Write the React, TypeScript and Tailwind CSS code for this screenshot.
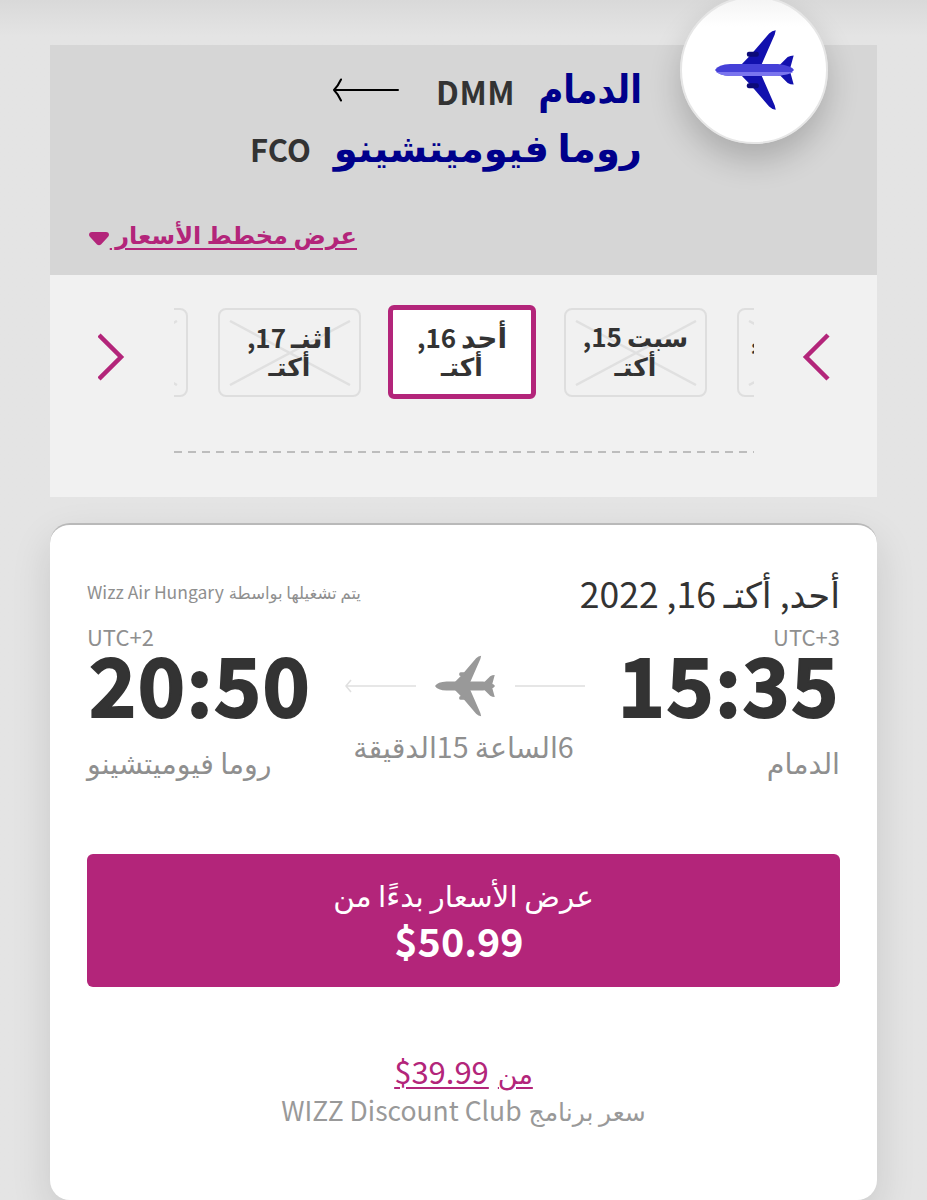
import { clsx } from "clsx";

interface DayOption {
  id: string;
  day: string;
  num: string;
  selected?: boolean;
  /** Spacing towards the next card on the left-to-right track. */
  className?: string;
  dayClassName?: string;
}

const MONTH = "أكتـ";

const days: DayOption[] = [
  { id: "18", day: "ثلا", num: "18,", className: "mr-[30px]", dayClassName: "text-[25px]" },
  { id: "17", day: "اثنـ", num: "17,", className: "mr-[27px]", dayClassName: "text-[28px]" },
  { id: "16", day: "أحد", num: "16,", selected: true, className: "mr-7", dayClassName: "text-[28px]" },
  { id: "15", day: "سبت", num: "15,", className: "mr-[30px]", dayClassName: "text-[25px]" },
  { id: "14", day: "جمعة", num: "14,", dayClassName: "text-[28px]" },
];

function Plane({ tone, className }: { tone: "blue" | "gray"; className?: string }) {
  const blue = tone === "blue";
  const wing = blue ? "#1210ae" : "#999";
  const engine = blue ? "#0c0a78" : "#999";
  return (
    <svg viewBox="0 0 238 240" className={className} aria-hidden="true">
      <g fill={wing}>
        <path d="M79 104 L108 74 L163 10 Q172 1 183 0 L180 13 L140 104 Z" />
        <path d="M79 136 L108 166 L163 230 Q172 239 183 240 L180 227 L140 136 Z" />
        <path d="M194 106 L219 81 Q227 76 237 76 L225 120 L237 164 Q227 164 219 159 L194 134 Z" />
      </g>
      <g fill={engine}>
        <rect x="96" y="65" width={blue ? 36 : 24} height="15" rx="6" />
        <rect x="96" y="160" width={blue ? 36 : 24} height="15" rx="6" />
      </g>
      <path
        d="M0 120 Q10 103 46 102 L190 102 Q232 108 238 120 Q232 132 190 138 L46 138 Q10 137 0 120 Z"
        fill={blue ? "#4540d8" : "#999"}
      />
      {blue && <path d="M3 126 L236 126 Q226 133 190 138 L46 138 Q16 137 3 126 Z" fill="#7a74ee" />}
    </svg>
  );
}

function Chevron({ dir }: { dir: "left" | "right" }) {
  return (
    <button type="button" aria-label={dir} className="h-12 w-7 shrink-0">
      <svg viewBox="0 0 28 48" className="h-12 w-7" fill="none" stroke="#b3257a" strokeWidth="4.500">
        <path d={dir === "left" ? "M26 2 L4 24 L26 46" : "M1 2 L23 24 L1 46"} />
      </svg>
    </button>
  );
}

function DayCard({ option }: { option: DayOption }) {
  return (
    <button
      type="button"
      dir="rtl"
      className={clsx(
        "relative flex shrink-0 flex-col items-center justify-center pb-[3px] text-[25px] font-bold leading-[29px] text-[#333]",
        option.selected
          ? "h-[94px] w-[148px] rounded-md border-[5px] border-[#b3257a] bg-white"
          : "h-[89px] w-[143px] rounded-lg border-2 border-[#dedede]",
        option.className,
      )}
    >
      {!option.selected && (
        <svg
          viewBox="0 0 122 66"
          className="absolute left-[9px] top-[10px] h-[66px] w-[122px]"
          stroke="#e0e0e0"
          strokeWidth="2.500"
        >
          <path d="M1 1 L121 65 M121 1 L1 65" />
        </svg>
      )}
      <span className="relative flex items-baseline gap-[5px] whitespace-nowrap">
        <span className={option.dayClassName}>{option.day}</span>
        <span className="text-[26px]">{option.num}</span>
      </span>
      <span className="relative">{MONTH}</span>
    </button>
  );
}

function RouteHeader() {
  return (
    <section className="relative h-[230px] bg-[#d6d6d6]">
      <div className="absolute -top-[49px] right-[49px] flex size-[148px] items-center justify-center rounded-full border-2 border-[#e6e6e6] bg-linear-to-b from-[#f4f4f4] to-white to-20% shadow-[0_16px_32px_rgba(0,0,0,0.2)]">
        <Plane tone="blue" className="h-20 w-[79px]" />
      </div>

      <div dir="rtl" className="flex flex-col pr-[235px] pt-[17px] font-bold">
        <div className="flex h-[57px] items-start">
          <span className="w-[103px] text-[39px] leading-[49px] text-[#00008b]">
            <span className="inline-block origin-right scale-x-[0.88]">الدمام</span>
          </span>
          <span className="mr-6 text-[32px] leading-[58px] tracking-[0.500px] text-[#333]">DMM</span>
          <svg
            viewBox="0 0 66 24"
            className="mr-[37px] mt-4 h-6 w-[66px]"
            fill="none"
            stroke="#000"
            strokeWidth="2"
            strokeLinecap="round"
          >
            <path d="M65 12 H1 M8 1.500 Q5 8 1 12 Q5 16 8 22.500" />
          </svg>
        </div>
        <div className="flex h-[57px] items-start">
          <span className="whitespace-nowrap text-[38.500px] leading-[52px] text-[#00008b]">روما فيوميتشينو</span>
          <span className="mr-[23px] text-[31px] leading-[60px] text-[#333]">FCO</span>
        </div>
      </div>

      <a dir="rtl" className="ml-[39px] mt-[38px] flex w-[268px] items-center justify-between text-[#b3257a]">
        <span className="whitespace-nowrap text-[24px] font-bold leading-[40px] underline decoration-2 underline-offset-4">
          عرض مخطط الأسعار&nbsp;
        </span>
        <svg viewBox="0 0 20 15" className="mt-2 h-[15px] w-5 shrink-0" fill="currentColor">
          <path d="M3 1 H17 Q20 1 20 4 Q20 5 18 7 L12 13.500 Q10 15 8 13.500 L2 7 Q0 5 0 4 Q0 1 3 1 Z" />
        </svg>
      </a>
    </section>
  );
}

function DateStrip() {
  return (
    <section className="flex h-[222px] bg-[#f1f1f1]">
      <div className="flex w-[124px] pl-12 pt-[58px]">
        <Chevron dir="right" />
      </div>
      <div className="w-[580px] overflow-hidden pt-[30px]">
        <div className="-ml-[129px] flex h-[94px] items-center">
          {days.map((d) => (
            <DayCard key={d.id} option={d} />
          ))}
        </div>
        <div className="mt-[52px] h-0.5 bg-[repeating-linear-gradient(90deg,#bdbdbd_0px,#bdbdbd_8px,transparent_8px,transparent_14.13px)]" />
      </div>
      <div className="flex w-[123px] pl-12 pt-[58px]">
        <Chevron dir="left" />
      </div>
    </section>
  );
}

function FlightCard() {
  return (
    <section className="mt-[26px] h-[677px] rounded-[20px] border-t-2 border-[#b9b9b9] bg-white px-[37px] shadow-[0_16px_40px_rgba(0,0,0,0.12)]">
      <div dir="rtl" className="flex h-[100px] items-end justify-between">
        <span className="whitespace-nowrap text-[35.500px] leading-[65px] text-[#333]">أحد, {MONTH} 16, 2022</span>
        <span className="flex items-baseline gap-[5px] whitespace-nowrap leading-[66px] text-[#8f8f8f]">
          <span className="text-[16.500px]">يتم تشغيلها بواسطة</span>
          <span className="text-[17.500px]">Wizz Air Hungary</span>
        </span>
      </div>

      <div className="flex h-[26px] justify-between text-[22px] leading-[22px] text-[#8f8f8f]">
        <span>UTC+2</span>
        <span>UTC+3</span>
      </div>

      <div className="flex h-[69px] items-center justify-between text-[80px] font-bold leading-[62px] tracking-[1.500px] text-[#333]">
        <span className="self-start pl-0.5 [-webkit-text-stroke:2px_#333]">20:50</span>
        <div className="flex items-center">
          <svg viewBox="0 0 71 14" className="h-3.5 w-[71px]" fill="none" stroke="#e0e0e0" strokeWidth="1.500">
            <path d="M71 7 H1 M6 1 L1 7 L6 13" />
          </svg>
          <Plane tone="gray" className="ml-[19px] mr-5 h-[62px] w-[60px]" />
          <div className="h-0.5 w-[70px] bg-[#e6e6e6]" />
        </div>
        <span className="self-start [-webkit-text-stroke:2px_#333]">15:35</span>
      </div>

      <div
        dir="rtl"
        className="grid h-[134px] grid-cols-[1fr_auto_1fr] items-start whitespace-nowrap text-[28.500px] text-[#8f8f8f]"
      >
        <span className="mt-[21px] leading-[41px]">الدمام</span>
        <span className="leading-[52px]">6الساعة 15الدقيقة</span>
        <span className="mt-[21px] text-left leading-[41px]">روما فيوميتشينو</span>
      </div>

      <button
        type="button"
        className="flex h-[133px] w-full flex-col items-center justify-center rounded-md bg-[#b3257a] pb-[7px] text-white"
      >
        <span dir="rtl" className="text-[29.500px] leading-[46px]">
          عرض الأسعار بدءًا من
        </span>
        <span className="mr-[9px] text-[39.500px] font-bold leading-[46px]">$50.99</span>
      </button>

      <div dir="rtl" className="mt-[63px] flex flex-col items-center whitespace-nowrap">
        <a className="flex items-baseline gap-[9px] text-[31px] leading-[41px] text-[#b3257a]">
          <span className="text-[27px] underline decoration-2 underline-offset-3">من</span>
          <span dir="ltr" className="underline decoration-2 underline-offset-3">
            $39.99
          </span>
        </a>
        <span className="flex items-baseline gap-[7px] text-[26.500px] leading-[34px] text-[#999]">
          <span className="text-[25px]">سعر برنامج</span>
          <span>WIZZ Discount Club</span>
        </span>
      </div>
    </section>
  );
}

export default function App() {
  return (
    <main className="h-[1200px] w-[927px] overflow-hidden bg-[#e4e4e4] bg-linear-to-b from-[#d9d9d9] to-[#e4e4e4] to-[36px] px-[50px] pt-[45px] font-['Noto_Sans_CJK_SC','DejaVu_Sans',sans-serif]">
      <div className="w-[827px]">
        <RouteHeader />
        <DateStrip />
        <FlightCard />
      </div>
    </main>
  );
}
